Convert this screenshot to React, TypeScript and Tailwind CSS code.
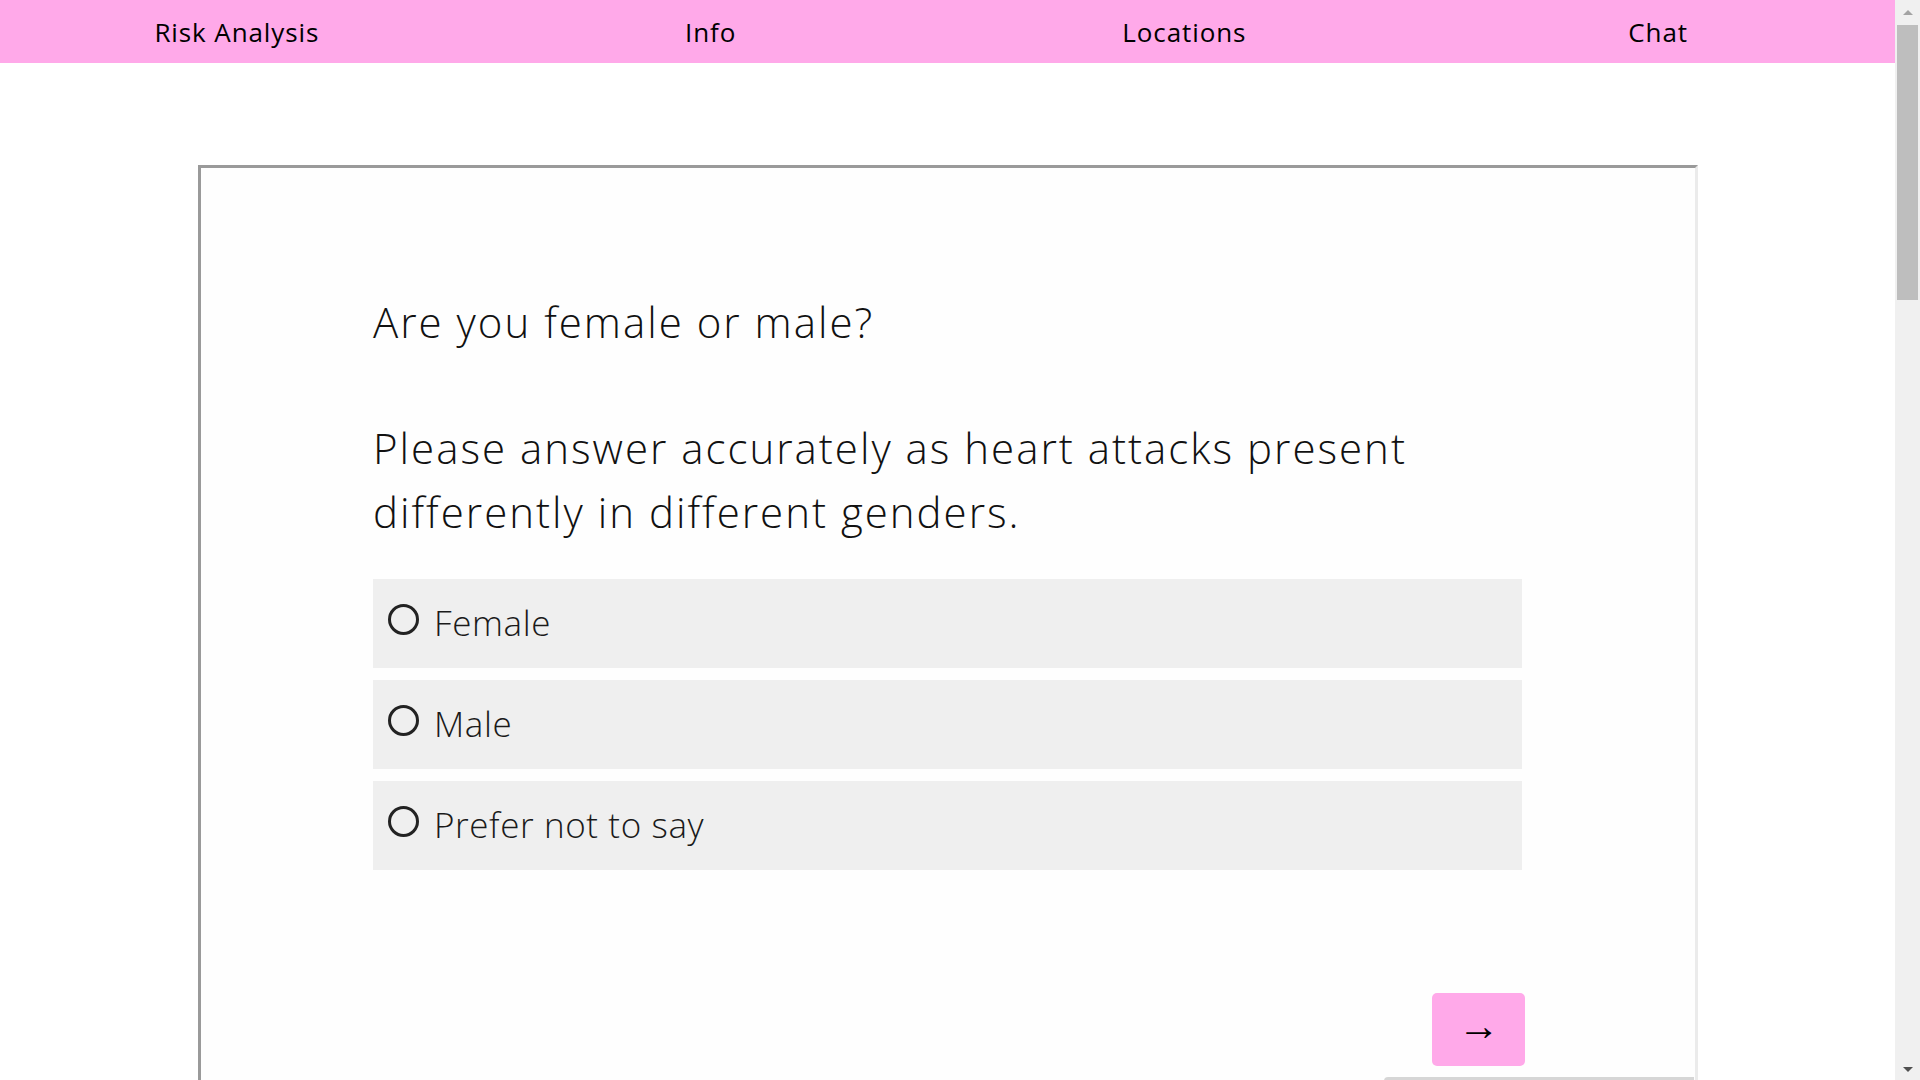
import React from "react";

const navItems = ["Risk Analysis", "Info", "Locations", "Chat"];
const options = ["Female", "Male", "Prefer not to say"];

export default function App() {
  return (
    <div
      className="flex h-screen w-full overflow-hidden bg-white text-black"
      style={{ fontFamily: '"Open Sans", "Noto Sans", sans-serif' }}
    >
      <main className="min-w-0 flex-1 overflow-hidden">
        <nav className="grid h-[63px] grid-cols-4 bg-[#ffa9e9]">
          {navItems.map((n) => (
            <div
              key={n}
              className="flex items-center justify-center text-[26px] font-normal leading-none tracking-[0.9px]"
            >
              {n}
            </div>
          ))}
        </nav>

        <div className="mx-auto mt-[102px] w-[1500px] border-[3px] border-t-[#9a9a9a] border-l-[#9a9a9a] border-r-[#ebebeb] border-b-[#ebebeb] bg-[#fefefe]">
          <div className="mx-auto w-[1149px] pt-[122px] pb-[200px]">
            <h1 className="text-[42px] font-light leading-[64px] tracking-[2px] text-[#111]">
              Are you female or male?
            </h1>
            <p className="mt-[62px] text-[42px] font-light leading-[64px] tracking-[2px] text-[#111]">
              Please answer accurately as heart attacks present differently in different genders.
            </p>
            <div className="mt-[35px] flex flex-col gap-[12px]">
              {options.map((o) => (
                <label key={o} className="flex h-[89px] cursor-pointer items-center bg-[#efefef] pl-[15px]">
                  <span className="mb-[9px] inline-block h-[31px] w-[31px] shrink-0 rounded-full border-[3px] border-[#222]" />
                  <span className="ml-[15px] text-[35px] font-light tracking-[0.6px] text-[#1a1a1a]">{o}</span>
                </label>
              ))}
            </div>
            <div className="mt-[123px] flex justify-end">
              <button
                className="mr-[-3px] flex h-[73px] w-[93px] items-center justify-center rounded-[5px] bg-[#ffa9e9] pb-[8px] text-[42px] leading-none text-black"
                style={{ fontFamily: '"Liberation Sans", Arial, sans-serif' }}
              >
                →
              </button>
            </div>
            <div className="mt-[11px] flex justify-end">
              <div className="mr-[-172px] h-[8px] w-[310px] rounded-l-[6px] bg-[#d6d6d6]" />
            </div>
          </div>
        </div>
      </main>

      <aside className="flex h-full w-[25px] shrink-0 flex-col items-center bg-[#f0f0f0]">
        <div className="flex h-[25px] w-full items-center justify-center">
          <div className="h-0 w-0 border-x-[5px] border-b-[5px] border-x-transparent border-b-[#a3a3a3]" />
        </div>
        <div className="h-[275px] w-[21px] bg-[#bebebe]" />
        <div className="flex-1" />
        <div className="flex h-[22px] w-full items-center justify-center">
          <div className="h-0 w-0 border-x-[5px] border-t-[5px] border-x-transparent border-t-[#505050]" />
        </div>
      </aside>
    </div>
  );
}
